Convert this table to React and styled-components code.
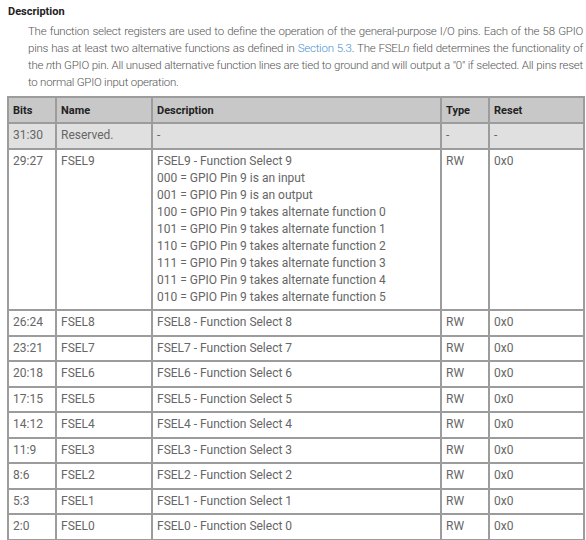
import React from "react";
import styled, { createGlobalStyle } from "styled-components";

const GlobalStyle = createGlobalStyle`
    body {
        margin: 0;
        background: #ffffff;
        font-family: Roboto, "Noto Sans", "Liberation Sans", sans-serif;
        color: #666666;
    }
`;

const Page = styled.div`
    width: 576px;
    padding: 4px 0 0 7px;
`;

const Heading = styled.h4`
    margin: 0 0 0 1px;
    font-size: 11px;
    line-height: 15px;
    font-weight: 700;
    color: #222222;
`;

const Intro = styled.div`
    margin: 4px 0 0 21px;
    font-size: 11.5px;
    letter-spacing: -0.25px;
    line-height: 17px;
    font-weight: 300;
    color: #555555;
`;

const IntroLine = styled.div`
    white-space: nowrap;
    text-align: left;
    text-align-last: ${(p) => (p.$last ? "left" : "justify")};
`;

const Link = styled.a`
    color: #4a8fd0;
    text-decoration: none;
`;

const Table = styled.table`
    margin-top: 5px;
    width: 576px;
    border-collapse: collapse;
    table-layout: fixed;
    font-size: 12px;
    line-height: 17px;
`;

const HeadCell = styled.th`
    background: #c8c8c8;
    border: 2px solid #9c9c9c;
    padding: 3.5px 4px;
    text-align: left;
    font-size: 11px;
    font-weight: 700;
    color: #222222;
`;

const Row = styled.tr`
    background: ${(p) => (p.$shaded ? "#e0e0e0" : "#ffffff")};
`;

const Cell = styled.td`
    border: 2px solid #9c9c9c;
    padding: 3.25px 4px;
    vertical-align: top;
    color: #666666;
    white-space: nowrap;
`;

const Line = styled.div``;

const fsel9 = [
    "FSEL9 - Function Select 9",
    "000 = GPIO Pin 9 is an input",
    "001 = GPIO Pin 9 is an output",
    "100 = GPIO Pin 9 takes alternate function 0",
    "101 = GPIO Pin 9 takes alternate function 1",
    "110 = GPIO Pin 9 takes alternate function 2",
    "111 = GPIO Pin 9 takes alternate function 3",
    "011 = GPIO Pin 9 takes alternate function 4",
    "010 = GPIO Pin 9 takes alternate function 5",
];

const fields = [
    ["26:24", 8],
    ["23:21", 7],
    ["20:18", 6],
    ["17:15", 5],
    ["14:12", 4],
    ["11:9", 3],
    ["8:6", 2],
    ["5:3", 1],
    ["2:0", 0],
];

export default function App() {
    return (
        <Page>
            <GlobalStyle />
            <Heading>Description</Heading>
            <Intro>
                <IntroLine>
                    The function select registers are used to define the operation of the general-purpose I/O pins. Each of the 58 GPIO
                </IntroLine>
                <IntroLine>
                    pins has at least two alternative functions as defined in <Link href="#">Section 5.3</Link>. The FSEL<i>n</i> field
                    determines the functionality of
                </IntroLine>
                <IntroLine>
                    the <i>n</i>th GPIO pin. All unused alternative function lines are tied to ground and will output a "0" if selected. All
                    pins reset
                </IntroLine>
                <IntroLine $last>to normal GPIO input operation.</IntroLine>
            </Intro>
            <Table>
                <colgroup>
                    <col style={{ width: 48 }} />
                    <col style={{ width: 96 }} />
                    <col style={{ width: 289 }} />
                    <col style={{ width: 48 }} />
                    <col style={{ width: 95 }} />
                </colgroup>
                <thead>
                    <tr>
                        <HeadCell>Bits</HeadCell>
                        <HeadCell>Name</HeadCell>
                        <HeadCell>Description</HeadCell>
                        <HeadCell>Type</HeadCell>
                        <HeadCell>Reset</HeadCell>
                    </tr>
                </thead>
                <tbody>
                    <Row $shaded>
                        <Cell>31:30</Cell>
                        <Cell>Reserved.</Cell>
                        <Cell>-</Cell>
                        <Cell>-</Cell>
                        <Cell>-</Cell>
                    </Row>
                    <Row>
                        <Cell>29:27</Cell>
                        <Cell>FSEL9</Cell>
                        <Cell>
                            {fsel9.map((t) => (
                                <Line key={t}>{t}</Line>
                            ))}
                        </Cell>
                        <Cell>RW</Cell>
                        <Cell>0x0</Cell>
                    </Row>
                    {fields.map(([bits, n]) => (
                        <Row key={bits}>
                            <Cell>{bits}</Cell>
                            <Cell>FSEL{n}</Cell>
                            <Cell>FSEL{n} - Function Select {n}</Cell>
                            <Cell>RW</Cell>
                            <Cell>0x0</Cell>
                        </Row>
                    ))}
                </tbody>
            </Table>
        </Page>
    );
}
